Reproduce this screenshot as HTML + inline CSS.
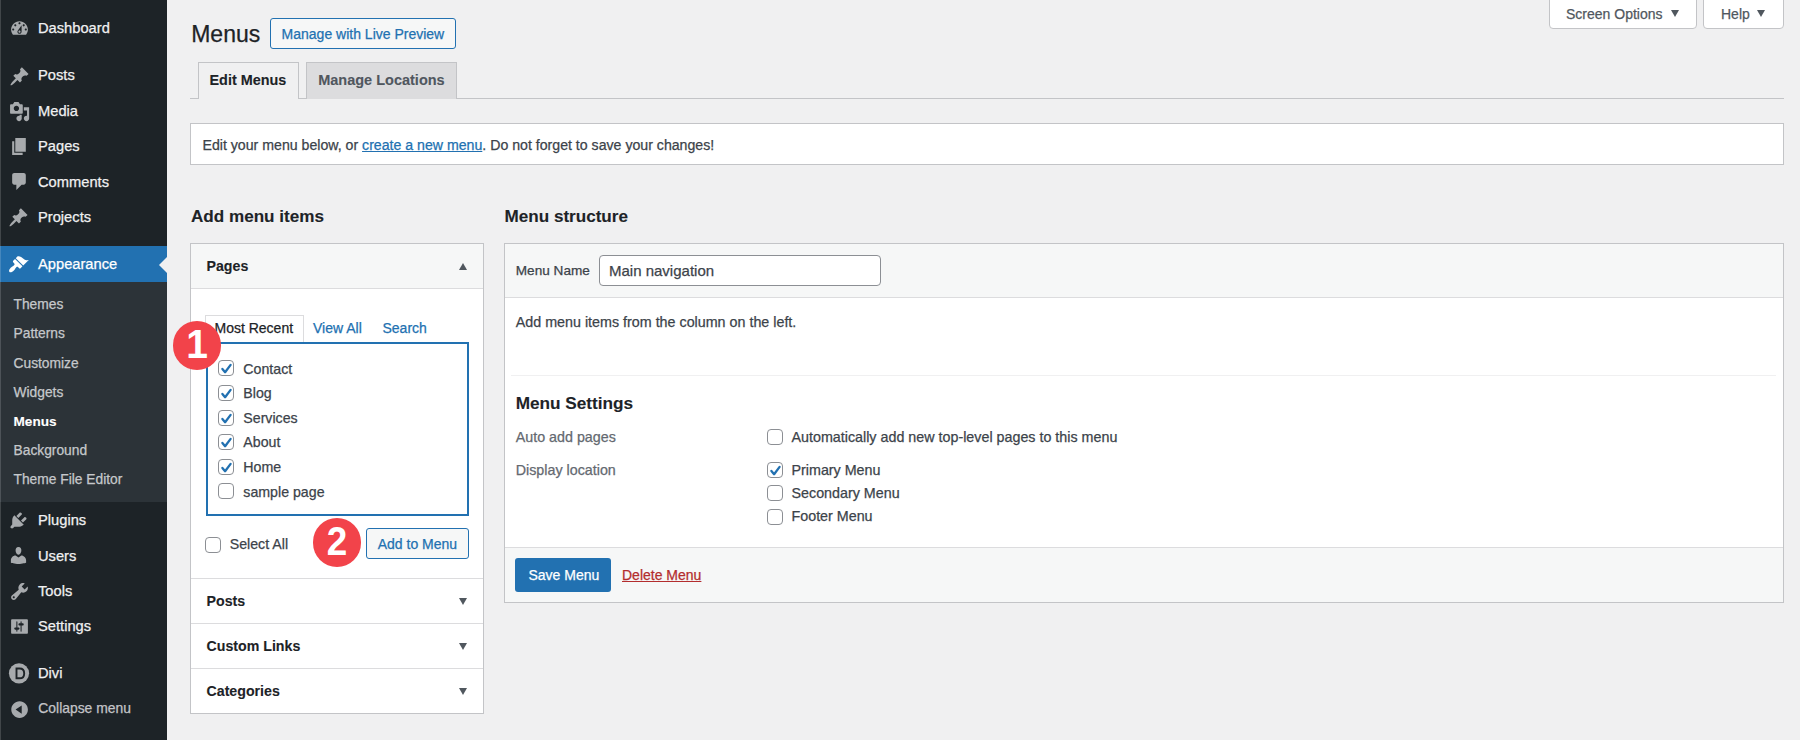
<!DOCTYPE html><html><head><meta charset="utf-8"><style>
*{margin:0;padding:0}
html,body{width:1800px;height:740px;overflow:hidden;background:#f0f0f1;font-family:"Liberation Sans",sans-serif}
.t{position:absolute;line-height:1;white-space:nowrap;-webkit-text-stroke:0.25px currentColor}
.r{position:absolute}
.cb{position:absolute;width:16px;height:16px;border:1px solid #8c8f94;border-radius:4px;background:#fff;box-sizing:border-box}
.cb svg{position:absolute;left:-1px;top:-1px}
.badge{position:absolute;border-radius:50%;background:#f2434a;}
.badge span{position:absolute;left:0;right:0;top:50%;text-align:center;color:#fff;font-weight:700;font-size:34px;line-height:1;transform:translateY(-50%)}
</style></head><body>
<div class="r" style="left:0px;top:0px;width:167px;height:740px;background:#1d2327"></div>
<div class="r" style="left:0px;top:282px;width:167px;height:220px;background:#2c3338"></div>
<div class="r" style="left:0px;top:246px;width:167px;height:36px;background:#2271b1"></div>
<div class="r" style="left:159px;top:257px;width:0;height:0;border-top:8px solid transparent;border-bottom:8px solid transparent;border-right:8px solid #f0f0f1"></div>
<div class="t" style="left:38.00px;top:21.26px;font-size:14.7px;font-weight:400;color:#f0f0f1;">Dashboard</div>
<div class="t" style="left:38.00px;top:68.06px;font-size:14.7px;font-weight:400;color:#f0f0f1;">Posts</div>
<div class="t" style="left:38.00px;top:103.56px;font-size:14.7px;font-weight:400;color:#f0f0f1;">Media</div>
<div class="t" style="left:38.00px;top:138.66px;font-size:14.7px;font-weight:400;color:#f0f0f1;">Pages</div>
<div class="t" style="left:38.00px;top:174.56px;font-size:14.7px;font-weight:400;color:#f0f0f1;">Comments</div>
<div class="t" style="left:38.00px;top:209.56px;font-size:14.7px;font-weight:400;color:#f0f0f1;">Projects</div>
<div class="t" style="left:38.00px;top:513.06px;font-size:14.7px;font-weight:400;color:#f0f0f1;">Plugins</div>
<div class="t" style="left:38.00px;top:548.56px;font-size:14.7px;font-weight:400;color:#f0f0f1;">Users</div>
<div class="t" style="left:38.00px;top:583.96px;font-size:14.7px;font-weight:400;color:#f0f0f1;">Tools</div>
<div class="t" style="left:38.00px;top:619.46px;font-size:14.7px;font-weight:400;color:#f0f0f1;">Settings</div>
<div class="t" style="left:38.00px;top:666.06px;font-size:14.7px;font-weight:400;color:#f0f0f1;">Divi</div>
<div class="t" style="left:38.00px;top:256.76px;font-size:14.7px;font-weight:400;color:#fff;">Appearance</div>
<div class="t" style="left:38.30px;top:701.63px;font-size:13.9px;font-weight:400;color:#c3c4c7;">Collapse menu</div>
<div class="t" style="left:13.50px;top:297.82px;font-size:13.8px;font-weight:400;color:#c5c8cb;">Themes</div>
<div class="t" style="left:13.50px;top:327.22px;font-size:13.8px;font-weight:400;color:#c5c8cb;">Patterns</div>
<div class="t" style="left:13.50px;top:356.62px;font-size:13.8px;font-weight:400;color:#c5c8cb;">Customize</div>
<div class="t" style="left:13.50px;top:385.62px;font-size:13.8px;font-weight:400;color:#c5c8cb;">Widgets</div>
<div class="t" style="left:13.50px;top:443.92px;font-size:13.8px;font-weight:400;color:#c5c8cb;">Background</div>
<div class="t" style="left:13.50px;top:472.92px;font-size:13.8px;font-weight:400;color:#c5c8cb;">Theme File Editor</div>
<div class="t" style="left:13.50px;top:414.69px;font-size:13.6px;font-weight:700;color:#fff;-webkit-text-stroke:0.1px currentColor;">Menus</div>
<div class="r" style="left:0px;top:0px;width:1px;height:740px;background:rgba(255,255,255,0.16)"></div>
<svg class="r" style="left:8.6px;top:17.6px" width="21" height="21" viewBox="0 0 20 20"><path d="M3.76 16h12.48c1.1-1.37 1.76-3.11 1.76-5 0-4.42-3.58-8-8-8s-8 3.58-8 8c0 1.89.66 3.63 1.76 5zM10 4c.55 0 1 .45 1 1s-.45 1-1 1-1-.45-1-1 .45-1 1-1zM6 6c.55 0 1 .45 1 1s-.45 1-1 1-1-.45-1-1 .45-1 1-1zm8 0c.55 0 1 .45 1 1s-.45 1-1 1-1-.45-1-1 .45-1 1-1zm-5.37 5.55L12 7v6c0 1.1-.9 2-2 2s-2-.9-2-2c0-.57.24-1.08.63-1.450zM4 10c.55 0 1 .45 1 1s-.45 1-1 1-1-.45-1-1 .45-1 1-1zm12 0c.55 0 1 .45 1 1s-.45 1-1 1-1-.45-1-1 .45-1 1-1zm-5 3c0-.55-.45-1-1-1s-1 .45-1 1 .45 1 1 1 1-.45 1-1z" fill="#a7aaad" fill-rule="evenodd"/></svg>
<svg class="r" style="left:8.7px;top:65.6px" width="21" height="21" viewBox="0 0 20 20"><path d="M10.44 3.02l1.82-1.820 6.36 6.35-1.83 1.82c-1.05-.68-2.48-.57-3.41.36l-.75.75c-.92.93-1.04 2.35-.35 3.41l-1.83 1.82-2.41-2.410-2.8 2.79c-.42.42-3.38 2.71-3.8 2.29s1.86-3.39 2.28-3.81l2.79-2.79L4.1 9.36l1.83-1.820c1.05.69 2.48.57 3.4-.36l.75-.75c.93-.92 1.05-2.35.36-3.41z" fill="#a7aaad" fill-rule="evenodd"/></svg>
<svg class="r" style="left:8.8px;top:100.6px" width="21.2" height="21.2" viewBox="0 0 20 20"><path d="M13 11V4c0-.55-.45-1-1-1h-1.67L9 1H5L3.670 3H2c-.55 0-1 .45-1 1v7c0 .55.45 1 1 1h10c.55 0 1-.45 1-1zM7 4.5c1.38 0 2.5 1.12 2.5 2.5S8.38 9.5 7 9.5 4.5 8.38 4.5 7 5.62 4.5 7 4.5zM14 6h5v10.5c0 1.38-1.12 2.5-2.5 2.5S14 17.88 14 16.5s1.120-2.5 2.5-2.5c.17 0 .34.02.5.05V9h-3V6zm-4 8.05V13h2v3.5c0 1.38-1.12 2.5-2.5 2.5S7 17.880 7 16.5 8.12 14 9.5 14c.17 0 .34.02.5.05z" fill="#a7aaad" fill-rule="evenodd"/></svg>
<svg class="r" style="left:8.6px;top:135.8px" width="21" height="21" viewBox="0 0 20 20"><path d="M6 15V2h10v13H6zm-1 1h8v2H3V5h2v11z" fill="#a7aaad" fill-rule="evenodd"/></svg>
<svg class="r" style="left:8.6px;top:171.2px" width="21" height="21" viewBox="0 0 20 20"><path d="M5 2h9c1.1 0 2 .9 2 2v7c0 1.1-.9 2-2 2h-2l-5 5v-5H5c-1.1 0-2-.9-2-2V4c0-1.1.9-2 2-2z" fill="#a7aaad" fill-rule="evenodd"/></svg>
<svg class="r" style="left:8.4px;top:207.2px" width="21" height="21" viewBox="0 0 20 20"><path d="M10.44 3.02l1.82-1.820 6.36 6.35-1.83 1.82c-1.05-.68-2.48-.57-3.41.36l-.75.75c-.92.93-1.04 2.35-.35 3.41l-1.83 1.82-2.41-2.410-2.8 2.79c-.42.42-3.38 2.71-3.8 2.29s1.86-3.39 2.28-3.81l2.79-2.79L4.1 9.36l1.83-1.820c1.05.69 2.48.57 3.4-.36l.75-.75c.93-.92 1.05-2.35.36-3.41z" fill="#a7aaad" fill-rule="evenodd"/></svg>
<svg class="r" style="left:8.3px;top:253.6px" width="21" height="21" viewBox="0 0 20 20"><path d="M14.48 11.06L7.41 3.99l1.5-1.5c.5-.56 2.3-.47 3.51.32 1.21.8 1.43 1.28 2.91 2.1 1.18.64 2.45 1.26 4.45.85zm-.71.71L6.7 4.7 4.93 6.47c-.39.39-.39 1.02 0 1.41l1.06 1.06c.39.39.39 1.03 0 1.42-.6.6-1.43 1.11-2.21 1.69-.35.26-.7.53-1.01.84C1.43 14.230.4 16.08 1.4 17.07c.99 1 2.84-.03 4.18-1.36.31-.31.58-.66.85-1.02.57-.78 1.08-1.61 1.69-2.21.39-.39 1.02-.39 1.41 0l1.06 1.06c.39.39 1.02.39 1.41 0z" fill="#fff" fill-rule="evenodd"/></svg>
<svg class="r" style="left:8.3px;top:509.8px" width="21" height="21" viewBox="0 0 20 20"><path d="M13.11 4.36L9.87 7.6 8 5.73l3.24-3.24c.35-.34 1.05-.2 1.56.32.52.51.66 1.21.31 1.55zm-8 1.77l.91-1.12 9.01 9.01-1.19.84c-.71.71-2.63 1.16-3.820 1.16H6.14L4.9 17.26c-.59.59-1.54.59-2.12 0-.59-.58-.59-1.53 0-2.12l1.24-1.24v-3.88c0-1.13.4-3.19 1.09-3.89zm7.26 3.97l3.24-3.24c.34-.35 1.04-.21 1.55.31.52.51.66 1.21.31 1.55l-3.24 3.25z" fill="#a7aaad" fill-rule="evenodd"/></svg>
<svg class="r" style="left:8.3px;top:544.8px" width="21" height="21" viewBox="0 0 20 20"><path d="M10 9.25c-2.27 0-2.73-3.44-2.73-3.44C7 4.02 7.82 2 9.97 2c2.16 0 2.98 2.02 2.71 3.81 0 0-.41 3.44-2.68 3.44zm0 2.57L12.72 10c2.39 0 4.52 2.33 4.52 4.53v2.49s-3.65 1.13-7.240 1.13c-3.65 0-7.24-1.13-7.24-1.13v-2.49c0-2.25 1.94-4.48 4.47-4.48z" fill="#a7aaad" fill-rule="evenodd"/></svg>
<svg class="r" style="left:8.5px;top:580.9px" width="21" height="21" viewBox="0 0 20 20"><path d="M16.68 9.77c-1.34 1.34-3.3 1.67-4.95.99l-5.41 6.52c-.99.99-2.59.99-3.58 0s-.99-2.590 0-3.57l6.52-5.42c-.68-1.65-.35-3.61.99-4.95 1.28-1.28 3.12-1.62 4.72-1.06l-2.89 2.89 2.82 2.82 2.86-2.87c.53 1.58.18 3.39-1.08 4.65zM3.81 16.21c.4.39 1.04.39 1.43 0 .4-.4.4-1.04 0-1.43-.39-.4-1.03-.4-1.43 0-.39.39-.39 1.03 0 1.43z" fill="#a7aaad" fill-rule="evenodd"/></svg>
<svg class="r" style="left:9.2px;top:615.8px" width="21" height="21" viewBox="0 0 20 20"><path d="M18 16V4c0-.55-.45-1-1-1H3c-.55 0-1 .45-1 1v12c0 .55.45 1 1 1h14c.55 0 1-.45 1-1zM8 11h1c.55 0 1 .45 1 1s-.45 1-1 1H8v1.5c0 .28-.22.5-.5.5s-.5-.22-.5-.5V13H6c-.55 0-1-.45-1-1s.45-1 1-1h1V5.5c0-.28.22-.5.5-.5s.5.22.5.5V11zm5-2h-1v5.5c0 .28-.22.5-.5.5s-.5-.22-.5-.5V9h-1c-.55 0-1-.45-1-1s.45-1 1-1h1V5.5c0-.28.22-.5.5-.5s.5.22.5.5V7h1c.55 0 1 .45 1 1s-.45 1-1 1z" fill="#a7aaad" fill-rule="evenodd"/></svg>
<svg class="r" style="left:9.0px;top:698.5px" width="21.2" height="21.2" viewBox="0 0 20 20"><path d="M10 2.16c4.33 0 7.84 3.51 7.840 7.84s-3.51 7.84-7.84 7.84S2.16 14.33 2.16 10 5.71 2.16 10 2.16zm2 11.72V6.12L6.18 9.97z" fill="#a7aaad" fill-rule="evenodd"/></svg>
<svg class="r" style="left:8px;top:662px" width="22" height="22" viewBox="0 0 22 22"><circle cx="11" cy="11.3" r="10.1" fill="#a7aaad"/><path d="M8.5 6.5 H11.6 C14.6 6.5 16.2 8.6 16.2 11.4 C16.2 14.2 14.6 16.3 11.6 16.3 H8.5 Z" fill="none" stroke="#1d2327" stroke-width="1.9"/></svg>
<div class="t" style="left:191.20px;top:23.03px;font-size:23px;font-weight:400;color:#1d2327;">Menus</div>
<div class="r" style="left:270px;top:18px;width:186px;height:31px;border:1px solid #2271b1;border-radius:3px;background:#f6f7f7;box-sizing:border-box"></div>
<div class="t" style="left:281.60px;top:26.75px;font-size:14px;font-weight:400;color:#2271b1;">Manage with Live Preview</div>
<div class="r" style="left:190px;top:98px;width:1594px;height:1px;background:#c3c4c7"></div>
<div class="r" style="left:198px;top:62px;width:101px;height:37px;border:1px solid #c3c4c7;border-bottom:none;background:#f0f0f1;box-sizing:border-box"></div>
<div class="r" style="left:306px;top:62px;width:151px;height:37px;border:1px solid #c3c4c7;border-bottom:none;background:#dcdcde;box-sizing:border-box"></div>
<div class="r" style="left:199px;top:98px;width:99px;height:1px;background:#f0f0f1"></div>
<div class="t" style="left:209.50px;top:73.41px;font-size:14.4px;font-weight:700;color:#1d2327;-webkit-text-stroke:0.1px currentColor;">Edit Menus</div>
<div class="t" style="left:318.20px;top:73.33px;font-size:14.5px;font-weight:700;color:#50575e;-webkit-text-stroke:0.1px currentColor;">Manage Locations</div>
<div class="r" style="left:1549px;top:-2px;width:148px;height:31px;border:1px solid #c3c4c7;border-radius:0 0 4px 4px;background:#fff;box-sizing:border-box"></div>
<div class="t" style="left:1566.00px;top:7.15px;font-size:14px;font-weight:400;color:#50575e;">Screen Options</div>
<div class="r" style="left:1671px;top:10px;width:0;height:0;border-left:4px solid transparent;border-right:4px solid transparent;border-top:7px solid #50575e"></div>
<div class="r" style="left:1703px;top:-2px;width:81px;height:31px;border:1px solid #c3c4c7;border-radius:0 0 4px 4px;background:#fff;box-sizing:border-box"></div>
<div class="t" style="left:1721.00px;top:7.15px;font-size:14px;font-weight:400;color:#50575e;">Help</div>
<div class="r" style="left:1757px;top:10px;width:0;height:0;border-left:4px solid transparent;border-right:4px solid transparent;border-top:7px solid #50575e"></div>
<div class="r" style="left:190px;top:123px;width:1594px;height:42px;border:1px solid #c3c4c7;background:#fff;box-sizing:border-box"></div>
<div class="t" style="left:202.50px;top:137.72px;font-size:14.15px;font-weight:400;color:#3c434a;">Edit your menu below, or <span style="color:#2271b1;text-decoration:underline">create a new menu</span>. Do not forget to save your changes!</div>
<div class="t" style="left:191.00px;top:208.02px;font-size:17.1px;font-weight:700;color:#1d2327;-webkit-text-stroke:0.1px currentColor;">Add menu items</div>
<div class="t" style="left:504.50px;top:208.32px;font-size:17.1px;font-weight:700;color:#1d2327;-webkit-text-stroke:0.1px currentColor;">Menu structure</div>
<div class="r" style="left:190px;top:243px;width:294px;height:471px;border:1px solid #c3c4c7;background:#fff;box-sizing:border-box"></div>
<div class="r" style="left:191px;top:244px;width:292px;height:44px;background:#f6f7f7"></div>
<div class="r" style="left:191px;top:288px;width:292px;height:1px;background:#dcdcde"></div>
<div class="t" style="left:206.50px;top:259.38px;font-size:14.2px;font-weight:700;color:#1d2327;-webkit-text-stroke:0.1px currentColor;">Pages</div>
<div class="r" style="left:459px;top:263px;width:0;height:0;border-left:4px solid transparent;border-right:4px solid transparent;border-bottom:7px solid #50575e"></div>
<div class="r" style="left:205px;top:315px;width:99px;height:29px;border:1px solid #dcdcde;border-bottom:none;background:#fff;box-sizing:border-box"></div>
<div class="t" style="left:214.50px;top:320.95px;font-size:14px;font-weight:400;color:#1d2327;">Most Recent</div>
<div class="t" style="left:313.00px;top:320.95px;font-size:14px;font-weight:400;color:#2271b1;">View All</div>
<div class="t" style="left:382.50px;top:320.95px;font-size:14px;font-weight:400;color:#2271b1;">Search</div>
<div class="r" style="left:206px;top:342px;width:263px;height:174px;border:2px solid #2271b1;box-sizing:border-box;background:#fff"></div>
<div class="cb" style="left:218.3px;top:360.4px"><svg width="16" height="16" viewBox="0 0 16 16"><path d="M4.4 8.9 L7.1 12.2 L12.6 4.9" fill="none" stroke="#2271b1" stroke-width="2.3" stroke-linecap="round" stroke-linejoin="round"/></svg></div>
<div class="t" style="left:243.30px;top:361.58px;font-size:14.2px;font-weight:400;color:#3c434a;">Contact</div>
<div class="cb" style="left:218.3px;top:385.0px"><svg width="16" height="16" viewBox="0 0 16 16"><path d="M4.4 8.9 L7.1 12.2 L12.6 4.9" fill="none" stroke="#2271b1" stroke-width="2.3" stroke-linecap="round" stroke-linejoin="round"/></svg></div>
<div class="t" style="left:243.30px;top:386.18px;font-size:14.2px;font-weight:400;color:#3c434a;">Blog</div>
<div class="cb" style="left:218.3px;top:409.6px"><svg width="16" height="16" viewBox="0 0 16 16"><path d="M4.4 8.9 L7.1 12.2 L12.6 4.9" fill="none" stroke="#2271b1" stroke-width="2.3" stroke-linecap="round" stroke-linejoin="round"/></svg></div>
<div class="t" style="left:243.30px;top:410.78px;font-size:14.2px;font-weight:400;color:#3c434a;">Services</div>
<div class="cb" style="left:218.3px;top:434.2px"><svg width="16" height="16" viewBox="0 0 16 16"><path d="M4.4 8.9 L7.1 12.2 L12.6 4.9" fill="none" stroke="#2271b1" stroke-width="2.3" stroke-linecap="round" stroke-linejoin="round"/></svg></div>
<div class="t" style="left:243.30px;top:435.38px;font-size:14.2px;font-weight:400;color:#3c434a;">About</div>
<div class="cb" style="left:218.3px;top:458.8px"><svg width="16" height="16" viewBox="0 0 16 16"><path d="M4.4 8.9 L7.1 12.2 L12.6 4.9" fill="none" stroke="#2271b1" stroke-width="2.3" stroke-linecap="round" stroke-linejoin="round"/></svg></div>
<div class="t" style="left:243.30px;top:459.98px;font-size:14.2px;font-weight:400;color:#3c434a;">Home</div>
<div class="cb" style="left:218.3px;top:483.4px"></div>
<div class="t" style="left:243.30px;top:484.58px;font-size:14.2px;font-weight:400;color:#3c434a;">sample page</div>
<div class="cb" style="left:205px;top:536.5px"></div>
<div class="t" style="left:229.70px;top:537.38px;font-size:14.2px;font-weight:400;color:#3c434a;">Select All</div>
<div class="r" style="left:366px;top:528px;width:103px;height:31px;border:1px solid #2271b1;border-radius:3px;background:#f6f7f7;box-sizing:border-box"></div>
<div class="t" style="left:377.70px;top:536.75px;font-size:14px;font-weight:400;color:#2271b1;">Add to Menu</div>
<div class="r" style="left:191px;top:578px;width:292px;height:1px;background:#dcdcde"></div>
<div class="r" style="left:191px;top:623px;width:292px;height:1px;background:#dcdcde"></div>
<div class="r" style="left:191px;top:668px;width:292px;height:1px;background:#dcdcde"></div>
<div class="t" style="left:206.50px;top:594.28px;font-size:14.2px;font-weight:700;color:#1d2327;-webkit-text-stroke:0.1px currentColor;">Posts</div>
<div class="r" style="left:459px;top:598px;width:0;height:0;border-left:4px solid transparent;border-right:4px solid transparent;border-top:7px solid #50575e"></div>
<div class="t" style="left:206.50px;top:639.48px;font-size:14.2px;font-weight:700;color:#1d2327;-webkit-text-stroke:0.1px currentColor;">Custom Links</div>
<div class="r" style="left:459px;top:643px;width:0;height:0;border-left:4px solid transparent;border-right:4px solid transparent;border-top:7px solid #50575e"></div>
<div class="t" style="left:206.50px;top:683.78px;font-size:14.2px;font-weight:700;color:#1d2327;-webkit-text-stroke:0.1px currentColor;">Categories</div>
<div class="r" style="left:459px;top:688px;width:0;height:0;border-left:4px solid transparent;border-right:4px solid transparent;border-top:7px solid #50575e"></div>
<div class="badge" style="left:172.6px;top:321.2px;width:48.5px;height:48.5px"></div>
<div class="t" style="left:177.3px;width:40px;text-align:center;top:324.09px;font-size:41px;font-weight:700;color:#fff;-webkit-text-stroke:0;transform:scaleX(0.95)">1</div>
<div class="badge" style="left:312.8px;top:518.0px;width:48.5px;height:48.5px"></div>
<div class="t" style="left:317.0px;width:40px;text-align:center;top:520.79px;font-size:41px;font-weight:700;color:#fff;-webkit-text-stroke:0;transform:scaleX(0.9)">2</div>
<div class="r" style="left:504px;top:243px;width:1280px;height:360px;border:1px solid #c3c4c7;background:#fff;box-sizing:border-box"></div>
<div class="r" style="left:505px;top:244px;width:1278px;height:53px;background:#f6f7f7"></div>
<div class="r" style="left:505px;top:297px;width:1278px;height:1px;background:#dcdcde"></div>
<div class="t" style="left:515.80px;top:264.49px;font-size:13.6px;font-weight:400;color:#3c434a;">Menu Name</div>
<div class="r" style="left:599px;top:255px;width:282px;height:31px;border:1px solid #8c8f94;border-radius:4px;background:#fff;box-sizing:border-box"></div>
<div class="t" style="left:609.00px;top:263.00px;font-size:15px;font-weight:400;color:#3c434a;">Main navigation</div>
<div class="t" style="left:515.80px;top:314.70px;font-size:14.3px;font-weight:400;color:#3c434a;">Add menu items from the column on the left.</div>
<div class="r" style="left:511px;top:375px;width:1265px;height:1px;background:#f0f0f1"></div>
<div class="t" style="left:515.70px;top:395.34px;font-size:17.2px;font-weight:700;color:#1d2327;-webkit-text-stroke:0.1px currentColor;">Menu Settings</div>
<div class="t" style="left:515.70px;top:430.20px;font-size:14.3px;font-weight:400;color:#646970;">Auto add pages</div>
<div class="t" style="left:515.70px;top:462.90px;font-size:14.3px;font-weight:400;color:#646970;">Display location</div>
<div class="cb" style="left:767px;top:429px"></div>
<div class="t" style="left:791.50px;top:430.20px;font-size:14.3px;font-weight:400;color:#3c434a;">Automatically add new top-level pages to this menu</div>
<div class="cb" style="left:767px;top:462.4px"><svg width="16" height="16" viewBox="0 0 16 16"><path d="M4.4 8.9 L7.1 12.2 L12.6 4.9" fill="none" stroke="#2271b1" stroke-width="2.3" stroke-linecap="round" stroke-linejoin="round"/></svg></div>
<div class="t" style="left:791.50px;top:463.20px;font-size:14.3px;font-weight:400;color:#3c434a;">Primary Menu</div>
<div class="cb" style="left:767px;top:485.4px"></div>
<div class="t" style="left:791.50px;top:486.30px;font-size:14.3px;font-weight:400;color:#3c434a;">Secondary Menu</div>
<div class="cb" style="left:767px;top:508.6px"></div>
<div class="t" style="left:791.50px;top:509.00px;font-size:14.3px;font-weight:400;color:#3c434a;">Footer Menu</div>
<div class="r" style="left:505px;top:547px;width:1278px;height:55px;background:#f6f7f7"></div>
<div class="r" style="left:505px;top:547px;width:1278px;height:1px;background:#dcdcde"></div>
<div class="r" style="left:515px;top:558px;width:96px;height:34px;background:#2271b1;border-radius:3px"></div>
<div class="t" style="left:528.50px;top:568.15px;font-size:14px;font-weight:400;color:#fff;">Save Menu</div>
<div class="t" style="left:622.00px;top:568.15px;font-size:14px;font-weight:400;color:#b32d2e;text-decoration:underline">Delete Menu</div>
</body></html>
